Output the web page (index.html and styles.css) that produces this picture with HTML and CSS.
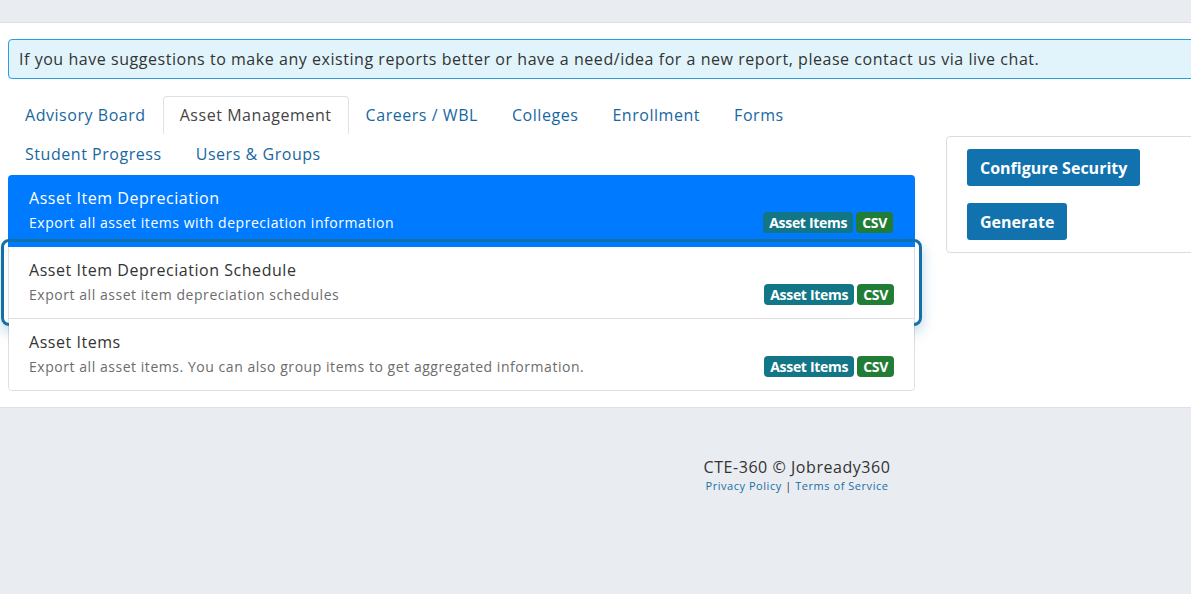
FILE: index.html
```html
<!DOCTYPE html>
<html lang="en">
  <head>
    <meta charset="UTF-8" />
    <meta name="viewport" content="width=device-width, initial-scale=1.0" />
    <title>Reports</title>
    <link rel="stylesheet" href="styles.css">
  </head>
  <body>
    <div class="page">
      <div class="topbar"></div>

      <main class="main">
        <div class="alert">
          If you have suggestions to make any existing reports better or have a need/idea for a new report, please contact us via live chat.
        </div>

        <div class="reports-row">
          <div class="reports-left">
            <ul class="tabs">
              <li><a href="#">Advisory Board</a></li>
              <li class="active"><a href="#">Asset Management</a></li>
              <li><a href="#">Careers / WBL</a></li>
              <li><a href="#">Colleges</a></li>
              <li><a href="#">Enrollment</a></li>
              <li><a href="#">Forms</a></li>
              <li><a href="#">Student Progress</a></li>
              <li><a href="#">Users &amp; Groups</a></li>
            </ul>

            <div class="report-list">
              <a href="#" class="report-item selected">
                <div class="report-title">Asset Item Depreciation</div>
                <div class="report-meta">
                  <span class="report-desc">Export all asset items with depreciation information</span>
                  <span class="badges">
                    <span class="badge badge-info">Asset Items</span>
                    <span class="badge badge-success">CSV</span>
                  </span>
                </div>
              </a>
              <a href="#" class="report-item focused">
                <div class="report-title">Asset Item Depreciation Schedule</div>
                <div class="report-meta">
                  <span class="report-desc">Export all asset item depreciation schedules</span>
                  <span class="badges">
                    <span class="badge badge-info">Asset Items</span>
                    <span class="badge badge-success">CSV</span>
                  </span>
                </div>
              </a>
              <a href="#" class="report-item">
                <div class="report-title">Asset Items</div>
                <div class="report-meta">
                  <span class="report-desc">Export all asset items. You can also group items to get aggregated information.</span>
                  <span class="badges">
                    <span class="badge badge-info">Asset Items</span>
                    <span class="badge badge-success">CSV</span>
                  </span>
                </div>
              </a>
            </div>
          </div>

          <div class="reports-right">
            <div class="action-card">
              <button class="btn">Configure Security</button>
              <button class="btn">Generate</button>
            </div>
          </div>
        </div>
      </main>

      <footer class="footer">
        <p class="copyright">CTE-360 &copy; Jobready360</p>
        <p class="footer-links">
          <a href="#">Privacy Policy</a> | <a href="#">Terms of Service</a>
        </p>
      </footer>
    </div>
  </body>
</html>
```

FILE: styles.css
```css
/* General Styles */
html,
body {
  margin: 0;
  overflow: hidden;
}

body {
  font-family: "Open Sans", "Noto Sans", sans-serif;
  color: #333;
  background-color: #e9ecf1;
  font-size: 16px;
  letter-spacing: 0.034em; /* widen a little, the brand font runs wide */
}

.page {
  width: 1594px;
}

.topbar {
  height: 22px;
  border-bottom: 1px solid #dde1e7;
}

.main {
  background-color: white;
  padding: 16px 8px 16px;
  border-bottom: 1px solid #dde1e7;
}

/* Info alert */
.alert {
  background-color: #e1f3fb;
  border: 1px solid #2a9ee0;
  border-radius: 4px;
  padding: 0 10px;
  height: 38px;
  line-height: 38px;
  color: #333;
  margin-bottom: 17px;
}

.reports-row {
  display: flex;
  gap: 31px;
  align-items: flex-start;
}

.reports-left {
  width: 907px;
}

.reports-right {
  width: 300px;
  margin-top: 40px;
}

/* Tabs */
.tabs {
  list-style: none;
  margin: 0;
  padding: 0;
  display: flex;
  flex-wrap: wrap;
}

.tabs li a {
  display: block;
  padding: 0 16px;
  height: 37px;
  line-height: 37px;
  color: #17679f;
  text-decoration: none;
  border: 1px solid transparent;
  border-bottom: none;
  border-radius: 4px 4px 0 0;
}

.tabs li.active a {
  color: #444;
  border-color: #dee2e6;
  background-color: white;
}

.tabs li:nth-child(n + 7) a {
  height: 38px;
  line-height: 38px;
}

/* Report list */
.report-list {
  margin-top: 2px;
  border: 1px solid #dfdfdf;
  border-radius: 4px;
}

.report-item {
  display: block;
  position: relative;
  padding: 12px 20px 11px;
  height: 48px;
  text-decoration: none;
  color: #333;
  background-color: white;
  border-bottom: 1px solid #dfdfdf;
}

.report-item:last-child {
  border-bottom: none;
  border-radius: 0 0 4px 4px;
}

.report-item.selected {
  background-color: #007bff;
  color: white;
  margin: -1px -1px 0;
  padding-left: 21px;
  padding-right: 22px;
  border-radius: 4px 4px 0 0;
  border-bottom-color: #007bff;
}

.report-item.focused::after {
  content: "";
  position: absolute;
  top: -8px;
  left: -8px;
  right: -8px;
  bottom: -8px;
  border: 3px solid #1670a8;
  border-radius: 8px;
  box-shadow: 0 6px 14px rgba(22, 112, 168, 0.28);
  pointer-events: none;
}

.report-title {
  font-size: 16px;
  line-height: 22px;
}

.report-meta {
  display: flex;
  justify-content: space-between;
  align-items: center;
  margin-top: 3px;
}

.report-desc {
  font-size: 14px;
  color: #6c6c6c;
}

.selected .report-desc {
  color: white;
}

.badges {
  display: flex;
  gap: 3px;
}

.badge {
  font-size: 14px;
  font-weight: bold;
  color: white;
  padding: 0 6px;
  height: 21px;
  line-height: 21px;
  border-radius: 4px;
  letter-spacing: -0.3px;
}

.badge-info {
  background-color: #137687;
}

.badge-success {
  background-color: #217c36;
}

/* Right hand actions */
.action-card {
  background-color: white;
  border: 1px solid #dcdcdc;
  border-radius: 4px;
  padding: 12px 20px 12px;
  display: flex;
  flex-direction: column;
  align-items: flex-start;
  gap: 17px;
}

.btn {
  font-family: inherit;
  font-size: 16px;
  font-weight: bold;
  color: white;
  background-color: #1172ae;
  border: none;
  border-radius: 3px;
  height: 37px;
  padding: 0 13px;
  letter-spacing: 0;
}

/* Footer */
.footer {
  text-align: center;
  padding-top: 48px;
}

.copyright {
  margin: 0;
  font-size: 16px;
  line-height: 22px;
  color: #333;
}

.footer-links {
  margin: 0;
  font-size: 11px;
  color: #333;
}

.footer-links a {
  color: #1a6fa5;
  text-decoration: none;
}
```
